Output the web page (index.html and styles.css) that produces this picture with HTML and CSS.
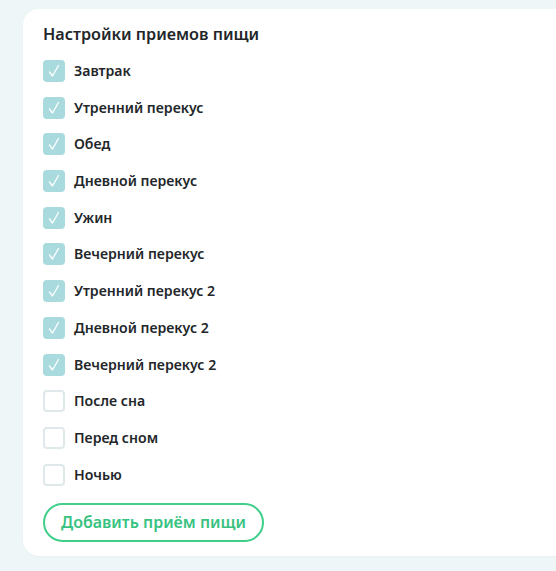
FILE: index.html
```html
<!DOCTYPE html>
<html lang="ru">
<head>
<meta charset="utf-8">
<link rel="stylesheet" href="styles.css">
</head>
<body>
<div class="page">
  <section class="card">
    <h2 class="title">Настройки приемов пищи</h2>
    <ul class="list">
      <li class="item"><span class="box on"><svg viewBox="0 0 22 22"><path d="M6.5 12 L9.5 16 L15.5 5.5"/></svg></span>Завтрак</li>
      <li class="item"><span class="box on"><svg viewBox="0 0 22 22"><path d="M6.5 12 L9.5 16 L15.5 5.5"/></svg></span>Утренний перекус</li>
      <li class="item"><span class="box on"><svg viewBox="0 0 22 22"><path d="M6.5 12 L9.5 16 L15.5 5.5"/></svg></span>Обед</li>
      <li class="item"><span class="box on"><svg viewBox="0 0 22 22"><path d="M6.5 12 L9.5 16 L15.5 5.5"/></svg></span>Дневной перекус</li>
      <li class="item"><span class="box on"><svg viewBox="0 0 22 22"><path d="M6.5 12 L9.5 16 L15.5 5.5"/></svg></span>Ужин</li>
      <li class="item"><span class="box on"><svg viewBox="0 0 22 22"><path d="M6.5 12 L9.5 16 L15.5 5.5"/></svg></span>Вечерний перекус</li>
      <li class="item"><span class="box on"><svg viewBox="0 0 22 22"><path d="M6.5 12 L9.5 16 L15.5 5.5"/></svg></span>Утренний перекус 2</li>
      <li class="item"><span class="box on"><svg viewBox="0 0 22 22"><path d="M6.5 12 L9.5 16 L15.5 5.5"/></svg></span>Дневной перекус 2</li>
      <li class="item"><span class="box on"><svg viewBox="0 0 22 22"><path d="M6.5 12 L9.5 16 L15.5 5.5"/></svg></span>Вечерний перекус 2</li>
      <li class="item"><span class="box"></span>После сна</li>
      <li class="item"><span class="box"></span>Перед сном</li>
      <li class="item"><span class="box"></span>Ночью</li>
    </ul>
    <button class="add" type="button">Добавить приём пищи</button>
  </section>
</div>
</body>
</html>
```
FILE: styles.css
```css
html, body {
  margin: 0;
  padding: 0;
  background: #eef6f8;
}
body {
  font-family: "Noto Sans", "Open Sans", sans-serif;
  color: #222629;
}
.page {
  padding: 9px 0 15px 23px;
}
.card {
  background: #ffffff;
  border-radius: 16px 0 0 16px;
  padding: 13px 20px 15px 20px;
  height: 547px;
  box-sizing: border-box;
  box-shadow: 0 1px 2px rgba(0, 0, 0, 0.03);
}
.title {
  margin: 0 0 14px 0;
  font-size: 16.2px;
  font-weight: 600;
  line-height: 24px;
  color: #222629;
}
.list {
  list-style: none;
  margin: 0;
  padding: 0;
  display: flex;
  flex-direction: column;
  gap: 14.7px;
}
.item {
  display: flex;
  align-items: center;
  gap: 9px;
  height: 22px;
  font-size: 14.1px;
  font-weight: 600;
  line-height: 22px;
}
.box {
  width: 22px;
  height: 22px;
  box-sizing: border-box;
  border-radius: 4px;
  border: 2px solid #dfe8ea;
  background: #ffffff;
  flex: none;
  display: flex;
}
.box.on {
  background: #a9dade;
  border-color: #a9dade;
}
.box svg {
  width: 22px;
  height: 22px;
  margin: -2px;
  fill: none;
  stroke: #ffffff;
  stroke-width: 1.3;
  stroke-linecap: round;
  stroke-linejoin: round;
}
.add {
  margin-top: 17px;
  height: 39px;
  padding: 0 16px;
  border: 2px solid #3fcf8a;
  border-radius: 20px;
  background: #ffffff;
  color: #37c27f;
  font-family: "Noto Sans", "Open Sans", sans-serif;
  font-size: 16px;
  font-weight: 600;
  cursor: pointer;
}
```
